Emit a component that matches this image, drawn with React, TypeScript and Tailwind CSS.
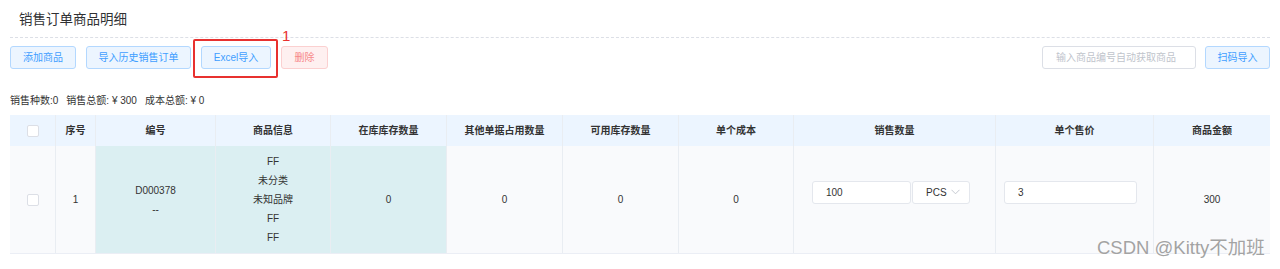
import React from "react";

const font = { fontFamily: '"Liberation Sans", "Noto Sans CJK SC", Arial, sans-serif' };

function Checkbox() {
  return <span className="inline-block w-[12px] h-[12px] bg-white border border-[#dcdfe6] rounded-[2px]" />;
}

function BlueBtn({ children, w }: { children: React.ReactNode; w: string }) {
  return (
    <button
      className={`${w} h-[23px] flex items-center justify-center rounded-[3px] border border-[#b3d8ff] bg-[#ecf5ff] text-[#409eff] text-[10px] leading-none`}
    >
      {children}
    </button>
  );
}

const headers = [
  "",
  "序号",
  "编号",
  "商品信息",
  "在库库存数量",
  "其他单据占用数量",
  "可用库存数量",
  "单个成本",
  "销售数量",
  "单个售价",
  "商品金额",
];

export default function App() {
  const cell = "border-r border-[#e9edf2] flex items-center justify-center";
  return (
    <div className="relative w-[1280px] h-[269px] bg-white overflow-hidden text-[#333]" style={font}>
      <div className="px-[10px]">
        <div className="h-[38px] flex items-center pt-[3px] pl-[9px] border-b border-dashed border-[#dcdfe6] text-[13.5px] text-[#303133]">
          销售订单商品明细
        </div>

        <div className="mt-[8px] h-[23px] flex justify-between">
          <div className="flex gap-[10px]">
            <BlueBtn w="w-[66px]">添加商品</BlueBtn>
            <BlueBtn w="w-[105px]">导入历史销售订单</BlueBtn>
            <BlueBtn w="w-[70px]">Excel导入</BlueBtn>
            <button className="w-[47px] h-[23px] flex items-center justify-center rounded-[3px] border border-[#fbd0d0] bg-[#fef0f0] text-[#f78989] text-[10px] leading-none">
              删除
            </button>
          </div>
          <div className="flex gap-[9px]">
            <div className="w-[154px] h-[23px] rounded-[3px] border border-[#dcdfe6] bg-white flex items-center pl-[13px] text-[10px] text-[#c0c4cc]">
              输入商品编号自动获取商品
            </div>
            <BlueBtn w="w-[65px]">扫码导入</BlueBtn>
          </div>
        </div>

        <div className="mt-[24px] h-[15px] leading-[15px] text-[10px] text-[#333] flex gap-[8px]">
          <span>销售种数:0</span>
          <span>销售总额: ¥ 300</span>
          <span>成本总额: ¥ 0</span>
        </div>

        <div className="mt-[7px] w-[1260px] border-b border-[#ebeef5]">
          <div className="grid grid-cols-[46px_40px_120px_115px_116px_116px_116px_115px_202px_158px_116px] h-[31px] bg-[#ecf5ff] text-[10px] font-bold text-[#333]">
            {headers.map((h, i) => (
              <div key={i} className={`${i === 10 ? "flex items-center justify-center" : cell}`}>
                {i === 0 ? <Checkbox /> : h}
              </div>
            ))}
          </div>
          <div className="grid grid-cols-[46px_40px_120px_115px_116px_116px_116px_115px_202px_158px_116px] h-[107px] bg-[#f9fafc] text-[10px] text-[#333]">
            <div className={cell}>
              <Checkbox />
            </div>
            <div className={cell}>1</div>
            <div className={`${cell} bg-[#dbeff2] flex-col leading-[19px]`}>
              <span>D000378</span>
              <span>--</span>
            </div>
            <div className={`${cell} bg-[#dbeff2] flex-col leading-[19px]`}>
              <span>FF</span>
              <span>未分类</span>
              <span>未知品牌</span>
              <span>FF</span>
              <span>FF</span>
            </div>
            <div className={`${cell} bg-[#dbeff2]`}>0</div>
            <div className={cell}>0</div>
            <div className={cell}>0</div>
            <div className={cell}>0</div>
            <div className="border-r border-[#e9edf2] flex items-center pl-[18px]">
              <div className="flex gap-[1px] mb-[15px]">
                <div className="w-[99px] h-[23px] bg-white border border-[#e4e7ed] rounded-[3px] flex items-center pl-[13px] text-[10px]">
                  100
                </div>
                <div className="w-[58px] h-[23px] bg-white border border-[#e4e7ed] rounded-[3px] flex items-center pl-[13px] text-[10px]">
                  PCS
                  <svg width="9" height="6" viewBox="0 0 9 6" className="ml-[4px]">
                    <path d="M0.5 0.8 L4.5 4.8 L8.5 0.8" fill="none" stroke="#c0c4cc" strokeWidth="0.9" />
                  </svg>
                </div>
              </div>
            </div>
            <div className="border-r border-[#e9edf2] flex items-center pl-[8px]">
              <div className="w-[133px] h-[23px] mb-[15px] bg-white border border-[#e4e7ed] rounded-[3px] flex items-center pl-[13px] text-[10px]">
                3
              </div>
            </div>
            <div className="flex items-center justify-center">300</div>
          </div>
        </div>
      </div>

      <div className="absolute left-[193px] top-[39px] w-[85px] h-[39px] border-2 border-[#e8312f] rounded-[2px]" />
      <div className="absolute left-[282px] top-[28px] text-[15px] leading-[16px] text-[#e8312f]">1</div>

      <div
        className="absolute left-[1097px] top-[237px] text-[18.5px] leading-[22px] text-[#a3a3a3] whitespace-nowrap"
        style={{ textShadow: "0 0 2px #fff" }}
      >
        CSDN @Kitty不加班
      </div>
    </div>
  );
}
